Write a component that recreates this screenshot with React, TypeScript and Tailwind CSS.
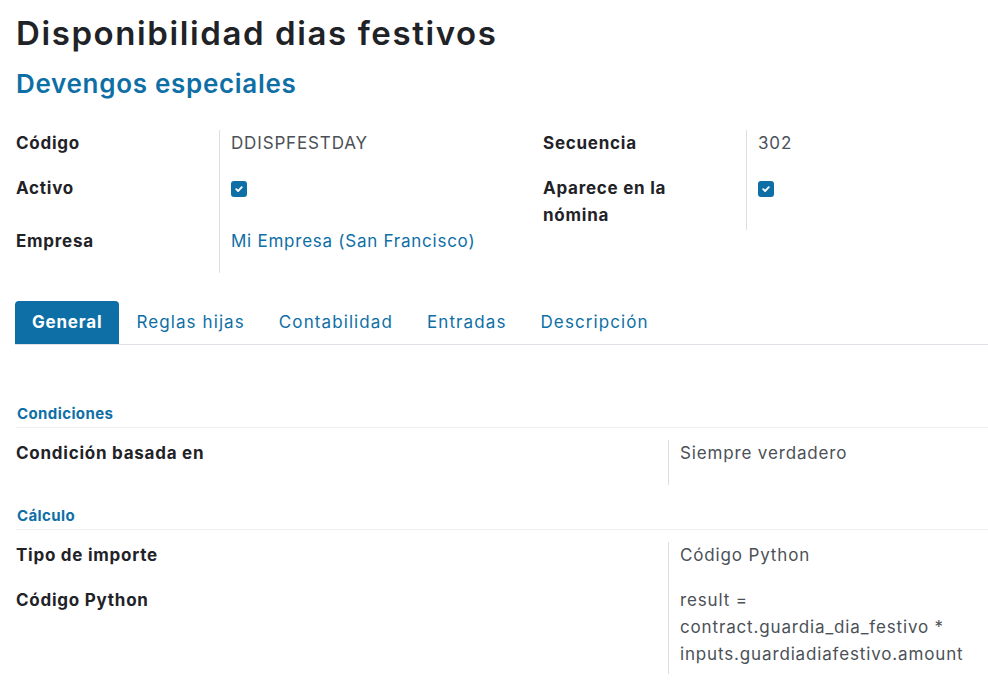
import React from "react";

function Check() {
  return (
    <span className="inline-flex w-4 h-4 rounded-[3px] bg-[#0e6fa6] items-center justify-center">
      <svg width="10" height="10" viewBox="0 0 10 10">
        <path d="M2.2 5.2 L4.1 7 L7.8 3.2" stroke="white" strokeWidth="1.8" fill="none" strokeLinecap="round" strokeLinejoin="round" />
      </svg>
    </span>
  );
}

function FieldRow({ label, children, h }: { label: React.ReactNode; children: React.ReactNode; h: string }) {
  return (
    <div className={`flex ${h}`}>
      <div className="w-[203px] shrink-0 pr-4 font-bold text-[#1f2328] leading-[27px] tracking-[0.75px]">{label}</div>
      <div className="border-l border-[#dcdfe3] pl-[11px] leading-[27px] text-[#4b5157] flex-1">{children}</div>
    </div>
  );
}

export default function App() {
  return (
    <div
      className="w-[988px] h-[699px] overflow-hidden bg-white text-[17px] tracking-[0.85px] text-[#1f2328]"
      style={{ fontFamily: "Inter, 'Noto Sans', sans-serif" }}
    >
      <div className="pl-4 pt-[13px]">
        <h1 className="text-[33px] leading-[40px] font-semibold tracking-[1.6px] text-[#1f2328]">
          Disponibilidad dias festivos
        </h1>
        <h2 className="mt-[15px] text-[26px] leading-[32px] font-semibold tracking-[0.7px] text-[#0e6fa6]">
          Devengos especiales
        </h2>

        <div className="mt-[30px] flex">
          <div className="w-[527px] flex flex-col">
            <FieldRow label="Código" h="h-[45px]">DDISPFESTDAY</FieldRow>
            <FieldRow label="Activo" h="h-[53px]">
              <div className="h-[27px] flex items-center">
                <Check />
              </div>
            </FieldRow>
            <FieldRow label="Empresa" h="h-[45px]">
              <span className="text-[#0e6fa6] tracking-[0.75px]">Mi Empresa (San Francisco)</span>
            </FieldRow>
          </div>
          <div className="flex-1 flex flex-col">
            <FieldRow label="Secuencia" h="h-[45px]">302</FieldRow>
            <FieldRow label={<>Aparece en la<br />nómina</>} h="h-[55px]">
              <div className="h-[27px] flex items-center">
                <Check />
              </div>
            </FieldRow>
          </div>
        </div>

        <div className="mt-[28px] -ml-px flex items-end border-b border-[#dee2e6] tracking-[1.1px]">
          <div className="h-[43px] px-[17px] flex items-center rounded-t-[4px] bg-[#0e6fa6] text-white font-bold tracking-[0.8px]">
            General
          </div>
          {["Reglas hijas", "Contabilidad", "Entradas", "Descripción"].map((t) => (
            <div key={t} className="h-[43px] px-[17px] flex items-center text-[#0e6fa6]">
              {t}
            </div>
          ))}
        </div>

        <div className="mt-[59px] border-b border-[#eceef0] pb-[3px]">
          <div className="pl-[1px] text-[15px] leading-[20px] font-bold tracking-[0.4px] text-[#0e6fa6]">Condiciones</div>
        </div>
        <div className="mt-[12px] flex">
          <div className="w-[652px] h-[45px] font-bold leading-[27px] tracking-[0.75px]">Condición basada en</div>
          <div className="border-l border-[#dcdfe3] pl-[11px] leading-[27px] text-[#4b5157]">Siempre verdadero</div>
        </div>

        <div className="mt-[21px] border-b border-[#eceef0] pb-[3px]">
          <div className="pl-[1px] text-[15px] leading-[20px] font-bold tracking-[0.4px] text-[#0e6fa6]">Cálculo</div>
        </div>
        <div className="mt-[12px] flex">
          <div className="w-[652px] flex flex-col font-bold leading-[27px] tracking-[0.75px]">
            <div className="h-[45px]">Tipo de importe</div>
            <div className="h-[87px]">Código Python</div>
          </div>
          <div className="border-l border-[#dcdfe3] pl-[11px] leading-[27px] text-[#4b5157] flex flex-col">
            <div className="h-[45px]">Código Python</div>
            <div className="h-[87px]">
              result =<br />
              contract.guardia_dia_festivo *<br />
              inputs.guardiadiafestivo.amount
            </div>
          </div>
        </div>

        <div className="mt-[25px] border-b border-[#eceef0] pb-[3px]">
          <div className="pl-[1px] text-[15px] leading-[20px] font-bold tracking-[0.4px] text-[#0e6fa6]">
            Contribución de la compañía
          </div>
        </div>
      </div>
    </div>
  );
}
